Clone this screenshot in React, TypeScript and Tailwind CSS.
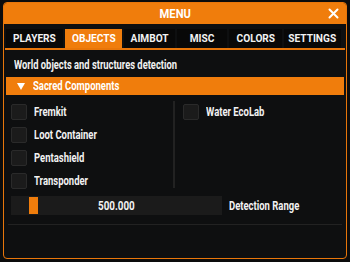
import React from "react";

const Check = ({ label }: { label: string }) => (
  <div className="flex items-center h-[23px]">
    <div className="w-[16px] h-[16px] rounded-[2px] bg-[#1b1b1b] border border-[#2a2a2a] shrink-0" />
    <span className="ml-[7px] text-[12px] font-bold text-[#f2f2f2] inline-block origin-left scale-x-[0.79] whitespace-nowrap">
      {label}
    </span>
  </div>
);

export default function App() {
  const tabs: [string, string][] = [
    ["PLAYERS", "w-[57px]"],
    ["OBJECTS", "w-[57px]"],
    ["AIMBOT", "w-[51px]"],
    ["MISC", "w-[50px]"],
    ["COLORS", "w-[53px]"],
    ["SETTINGS", "w-[57px]"],
  ];
  return (
    <div
      className="w-[350px] h-[262px] bg-[#0c0c0c] pt-[2px] pl-[3px]"
      style={{ fontFamily: "Roboto, 'Liberation Sans', sans-serif" }}
    >
      <div className="w-[344px] h-[257px] rounded-[4px] border border-[#e8760a] bg-[#0e0f10] flex flex-col overflow-hidden">
        <div className="h-[21px] bg-[#f07d0c] flex items-center justify-center relative shrink-0">
          <span className="text-white font-bold text-[13px] inline-block scale-x-[0.86]">MENU</span>
          <svg className="absolute right-[7px] top-[5px]" width="11" height="11" viewBox="0 0 11 11">
            <path d="M1.5 1.5 L9.5 9.5 M9.5 1.5 L1.5 9.5" stroke="white" strokeWidth="2" strokeLinecap="round" />
          </svg>
        </div>
        <div className="px-[1px] pt-[5px]">
          <div className="flex gap-[2px] border-b-[2px] border-[#e8760a] h-[21px] pl-[1px]">
            {tabs.map(([t, w]) => (
              <div
                key={t}
                className={
                  w +
                  " flex items-center justify-center text-[11.5px] font-bold " +
                  (t === "OBJECTS" ? "bg-[#f07d0c] text-white" : "bg-[#080808] text-[#f2f2f2]")
                }
              >
                <span className="inline-block scale-x-[0.88] whitespace-nowrap">{t}</span>
              </div>
            ))}
          </div>
        </div>
        <div className="pl-[10px] pt-[6px] h-[27px] text-[12px] font-bold text-[#f2f2f2]">
          <span className="inline-block origin-left scale-x-[0.78] whitespace-nowrap">
            World objects and structures detection
          </span>
        </div>
        <div className="mx-[2px] h-[18px] bg-[#f07d0c] flex items-center pl-[11px]">
          <svg width="8" height="7" viewBox="0 0 8 7">
            <path d="M0 0 H8 L4 7 Z" fill="white" />
          </svg>
          <span className="ml-[8px] text-white text-[12px] font-bold inline-block origin-left scale-x-[0.79] whitespace-nowrap">
            Sacred Components
          </span>
        </div>
        <div className="flex pt-[5px] pl-[7px]">
          <div className="w-[162px] flex flex-col">
            <Check label="Fremkit" />
            <Check label="Loot Container" />
            <Check label="Pentashield" />
            <Check label="Transponder" />
          </div>
          <div className="w-[2px] bg-[#222222] h-[87px] mt-[1px]" />
          <div className="pl-[8px] flex flex-col">
            <Check label="Water EcoLab" />
          </div>
        </div>
        <div className="flex items-center pl-[7px] pt-[4px]">
          <div className="w-[211px] h-[19px] bg-[#1b1b1b] relative flex items-center justify-center">
            <div className="absolute left-[18px] top-[1px] w-[9px] h-[17px] bg-[#f07d0c]" />
            <span className="text-[12px] font-bold text-[#f2f2f2] inline-block scale-x-[0.82]">500.000</span>
          </div>
          <span className="ml-[7px] text-[12px] font-bold text-[#f2f2f2] inline-block origin-left scale-x-[0.79] whitespace-nowrap">
            Detection Range
          </span>
        </div>
        <div className="mx-[4px] mt-[9px] h-[1px] bg-[#222222]" />
      </div>
    </div>
  );
}
